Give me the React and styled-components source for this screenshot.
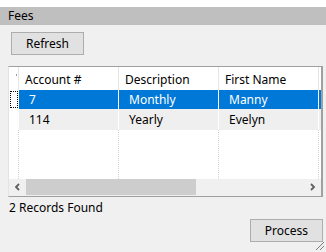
import { createGlobalStyle, styled, css } from "styled-components";

const GlobalStyle = createGlobalStyle`
  html, body {
    margin: 0;
    padding: 0;
    background: #ffffff;
  }
  body {
    font-family: "Noto Sans", "Liberation Sans", sans-serif;
    font-size: 12px;
    color: #000;
  }
`;

const Window = styled.div`
  width: 326px;
  height: 252px;
  padding-top: 7px;
  box-sizing: border-box;
  display: flex;
  flex-direction: column;
`;

const TitleBar = styled.div`
  height: 18px;
  background: #bfbfbf;
  display: flex;
  align-items: center;
  padding-left: 8px;
  font-size: 12px;
  line-height: 1;
`;

const Body = styled.div`
  flex: 1;
  background: #f0f0f0;
  display: flex;
  flex-direction: column;
  padding: 7px 3px 0 8px;
  position: relative;
`;

const Button = styled.button`
  width: 73px;
  height: 23px;
  padding: 0;
  background: #e1e1e1;
  border: 1px solid #adadad;
  font-family: inherit;
  font-size: 12px;
  color: #000;
  display: flex;
  align-items: center;
  justify-content: center;
  ${(p) =>
    p.$left &&
    css`
      margin-left: 3px;
    `}
`;

const Grid = styled.div`
  margin-top: 11px;
  height: 129px;
  border: 1px solid #a0a0a0;
  border-right-width: 2px;
  border-left-color: #e3e3e3;
  background: #ffffff;
  display: flex;
  flex-direction: column;
  overflow: hidden;
`;

const Viewport = styled.div`
  flex: 1;
  display: flex;
  flex-direction: column;
  overflow: hidden;
`;

const Row = styled.div`
  display: flex;
  height: ${(p) => p.$h}px;
  flex: ${(p) => (p.$fill ? 1 : "none")};
  background: ${(p) => p.$bg || "#ffffff"};
  color: ${(p) => (p.$selected ? "#ffffff" : "#000000")};
`;

const RowHead = styled.div`
  width: 9px;
  flex: none;
  background: #ffffff;
  position: relative;
`;

const HeadTick = styled.span`
  position: absolute;
  right: 1px;
  top: 7px;
  width: 1px;
  height: 2px;
  background: #9a9a9a;
`;

const FocusRect = styled.span`
  position: absolute;
  left: 1px;
  top: 1px;
  right: 0;
  bottom: 1px;
  border: 1px dotted #000;
`;

const Cell = styled.div`
  width: 100px;
  flex: none;
  box-sizing: border-box;
  display: flex;
  align-items: center;
  white-space: nowrap;
  overflow: hidden;
  padding-left: ${(p) => p.$pad}px;
  padding-top: ${(p) => p.$top || 0}px;
  border-left: 1px ${(p) => p.$line || "solid"} ${(p) => p.$lineColor};
`;

const ScrollBar = styled.div`
  height: 16px;
  flex: none;
  display: flex;
  background: #f0f0f0;
  border-bottom: 1px solid #f0f0f0;
`;

const Arrow = styled.div`
  width: 17px;
  flex: none;
  display: flex;
  align-items: center;
  justify-content: center;
`;

const Thumb = styled.div`
  width: 170px;
  background: #cdcdcd;
`;

const Track = styled.div`
  flex: 1;
`;

const Status = styled.div`
  margin-top: 2px;
  padding-left: 1px;
  height: 16px;
  display: flex;
  align-items: center;
`;

const Footer = styled.div`
  display: flex;
  justify-content: flex-end;
  margin-top: 4px;
`;

const Grip = styled.svg`
  position: absolute;
  right: 1px;
  bottom: 1px;
`;

const columns = ["Account #", "Description", "First Name", ""];
const rows = [
  { cells: ["7", "Monthly", "Manny", ""], selected: true, h: 19 },
  { cells: ["114", "Yearly", "Evelyn", ""], selected: false, h: 21 },
];

function Chevron({ dir }) {
  const d = dir === "left" ? "M6 2 L3 5 L6 8" : "M3 2 L6 5 L3 8";
  return (
    <svg width="9" height="10" viewBox="0 0 9 10">
      <path d={d} fill="none" stroke="#606060" strokeWidth="1.8" />
    </svg>
  );
}

function App() {
  return (
    <>
      <GlobalStyle />
      <Window>
        <TitleBar>Fees</TitleBar>
        <Body>
          <Button $left>Refresh</Button>
          <Grid>
            <Viewport>
              <Row $h={23}>
                <RowHead>
                  <HeadTick />
                </RowHead>
                {columns.map((c, i) => (
                  <Cell key={i} $pad={6} $top={2} $lineColor="#e5e5e5">
                    {c}
                  </Cell>
                ))}
              </Row>
              {rows.map((r, ri) => (
                <Row
                  key={ri}
                  $h={r.h}
                  $selected={r.selected}
                  $bg={r.selected ? "#0078d7" : "#efefef"}
                >
                  <RowHead>{r.selected && <FocusRect />}</RowHead>
                  {r.cells.map((c, i) => (
                    <Cell key={i} $pad={10} $lineColor="#ffffff">
                      {c}
                    </Cell>
                  ))}
                </Row>
              ))}
              <Row $fill>
                <RowHead />
                {columns.map((c, i) => (
                  <Cell key={i} $line="dotted" $lineColor="#d4d4d4" />
                ))}
              </Row>
            </Viewport>
            <ScrollBar>
              <Arrow>
                <Chevron dir="left" />
              </Arrow>
              <Thumb />
              <Track />
              <Arrow>
                <Chevron dir="right" />
              </Arrow>
            </ScrollBar>
          </Grid>
          <Status>2 Records Found</Status>
          <Footer>
            <Button>Process</Button>
          </Footer>
          <Grip width="11" height="11" viewBox="0 0 11 11">
            <path d="M10 2 L2 10 M10 6 L6 10" stroke="#7a7a7a" strokeWidth="1" />
          </Grip>
        </Body>
      </Window>
    </>
  );
}

export default App;
